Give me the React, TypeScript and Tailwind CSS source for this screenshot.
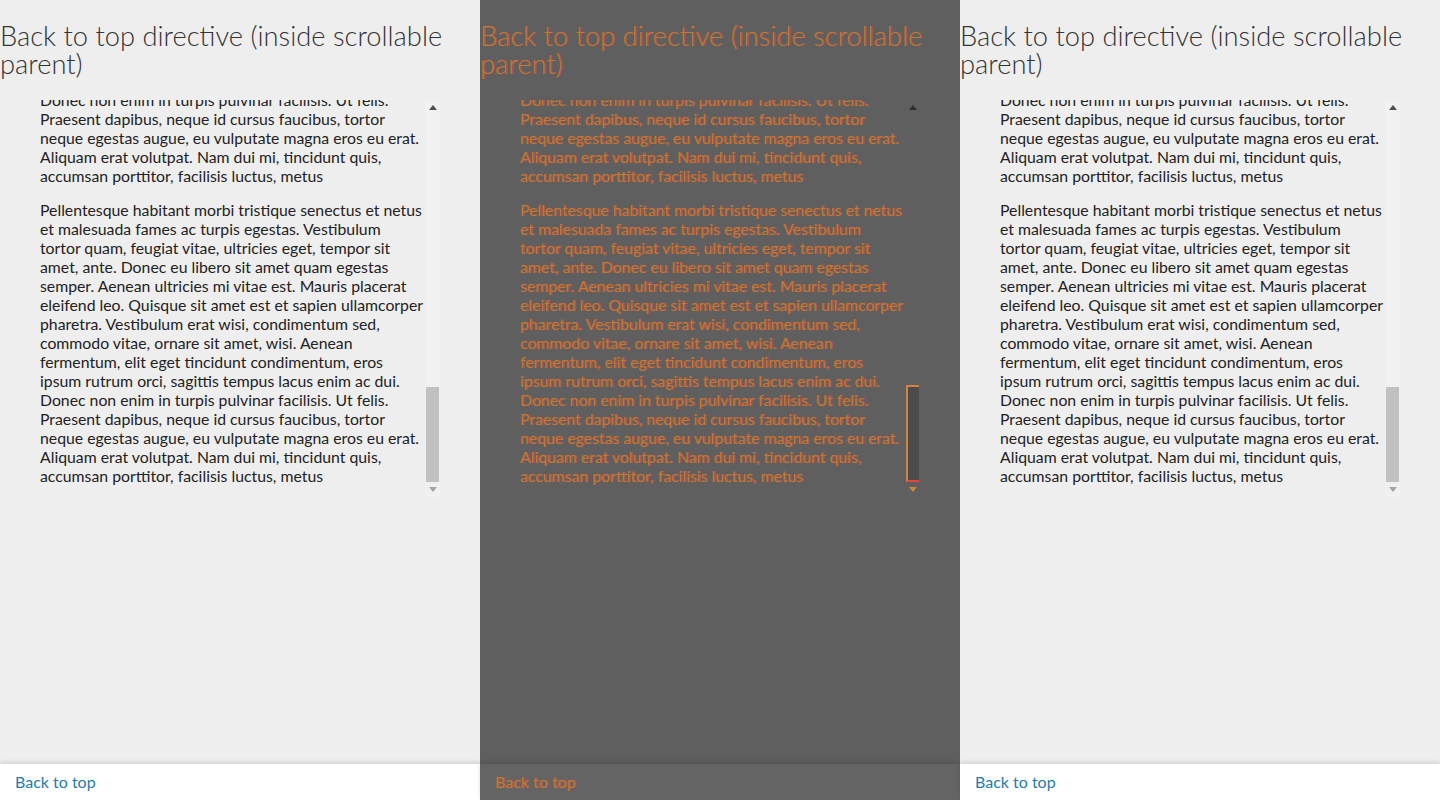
import { useEffect, useRef } from 'react'

// line breaks as they fall in the reference
const LINES = [
  'Pellentesque habitant morbi tristique senectus et netus',
  'et malesuada fames ac turpis egestas. Vestibulum',
  'tortor quam, feugiat vitae, ultricies eget, tempor sit',
  'amet, ante. Donec eu libero sit amet quam egestas',
  'semper. Aenean ultricies mi vitae est. Mauris placerat',
  'eleifend leo. Quisque sit amet est et sapien ullamcorper',
  'pharetra. Vestibulum erat wisi, condimentum sed,',
  'commodo vitae, ornare sit amet, wisi. Aenean',
  'fermentum, elit eget tincidunt condimentum, eros',
  'ipsum rutrum orci, sagittis tempus lacus enim ac dui.',
  'Donec non enim in turpis pulvinar facilisis. Ut felis.',
  'Praesent dapibus, neque id cursus faucibus, tortor',
  'neque egestas augue, eu vulputate magna eros eu erat.',
  'Aliquam erat volutpat. Nam dui mi, tincidunt quis,',
  'accumsan porttitor, facilisis luctus, metus',
]

function Scrollbar({ dark }: { dark?: boolean }) {
  return (
    <div className={dark ? 'w-[15px] flex flex-col items-center' : 'w-[15px] flex flex-col items-center bg-[#f1f1f1]'}>
      <div className="h-[15px] flex items-center justify-center">
        <svg width="8" height="5" viewBox="0 0 8 5">
          <path d="M4 0L8 5H0z" fill={dark ? '#2e2e2e' : '#505050'} />
        </svg>
      </div>
      <div className="flex-1" />
      <div
        className={
          dark
            ? 'w-[13px] h-[97px] bg-[#4c4c4c] border-2 border-[#d2843c] border-b-[#e8443a] border-r-0'
            : 'w-[13px] h-[95px] bg-[#c1c1c1]'
        }
      />
      <div className="h-[15px] flex items-center justify-center">
        <svg width="8" height="5" viewBox="0 0 8 5">
          <path d="M0 0H8L4 5z" fill={dark ? '#d2843c' : '#a3a3a3'} />
        </svg>
      </div>
    </div>
  )
}

function Panel({ dark }: { dark?: boolean }) {
  const boxRef = useRef<HTMLDivElement>(null)

  useEffect(() => {
    const el = boxRef.current
    if (el) el.scrollTop = el.scrollHeight
  }, [])

  return (
    <div
      className={
        dark
          ? 'flex flex-col h-[800px] bg-[#5f5f5f] text-[#c27a34] [text-shadow:1px_0_0_rgba(232,68,58,0.6)]'
          : 'flex flex-col h-[800px] bg-[#eeeeee] text-[#222]'
      }
    >
      <h1
        className={
          dark
            ? 'pt-[22px] text-[27.3px] leading-[28px] font-light'
            : 'pt-[22px] text-[27.3px] leading-[28px] font-light text-[#333]'
        }
      >
        Back to top directive (inside scrollable parent)
      </h1>

      <div className="mt-[22px] ml-10 w-[400px] h-[397px] flex">
        <div ref={boxRef} className="flex-1 overflow-hidden">
          {[0, 1, 2, 3, 4].map(i => (
            <p key={i} className="mb-[15px] last:mb-[12px] text-[15.8px] leading-[19px] whitespace-nowrap">
              {LINES.map((line, j) => (
                <span key={j} className="block">
                  {line}
                </span>
              ))}
            </p>
          ))}
        </div>
        <Scrollbar dark={dark} />
      </div>

      <div className="flex-1" />

      <div
        className={
          dark
            ? 'h-[36px] flex items-center px-[15px] bg-[#646464] shadow-[0_-2px_4px_rgba(0,0,0,0.12)]'
            : 'h-[36px] flex items-center px-[15px] bg-white shadow-[0_-2px_4px_rgba(0,0,0,0.12)]'
        }
      >
        <a href="#" className={dark ? 'text-[16px]' : 'text-[16px] text-[#1e7cab]'}>
          Back to top
        </a>
      </div>
    </div>
  )
}

export default function App() {
  return (
    <div className="grid grid-cols-3 w-[1440px] h-[800px] overflow-hidden font-['Lato',sans-serif]">
      <Panel />
      <Panel dark />
      <Panel />
    </div>
  )
}
